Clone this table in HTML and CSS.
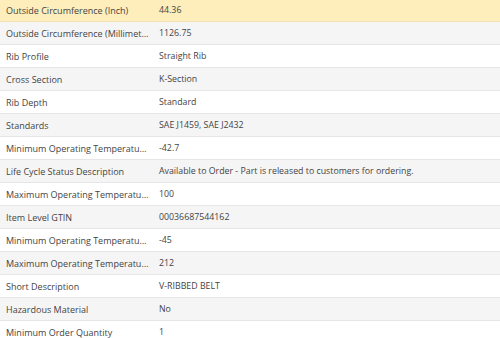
FILE: index.html
```html
<!DOCTYPE html>
<html>
<head>
<meta charset="utf-8">
<link rel="stylesheet" href="styles.css">
</head>
<body>
<div class="specs">
  <div class="row hl"><div class="k">Outside Circumference (Inch)</div><div class="v">44.36</div></div>
  <div class="row"><div class="k">Outside Circumference (Millimeters)</div><div class="v">1126.75</div></div>
  <div class="row"><div class="k">Rib Profile</div><div class="v">Straight Rib</div></div>
  <div class="row"><div class="k">Cross Section</div><div class="v">K-Section</div></div>
  <div class="row"><div class="k">Rib Depth</div><div class="v">Standard</div></div>
  <div class="row"><div class="k">Standards</div><div class="v">SAE J1459, SAE J2432</div></div>
  <div class="row"><div class="k">Minimum Operating Temperature (Celsius)</div><div class="v">-42.7</div></div>
  <div class="row"><div class="k">Life Cycle Status Description</div><div class="v">Available to Order - Part is released to customers for ordering.</div></div>
  <div class="row"><div class="k">Maximum Operating Temperature (Celsius)</div><div class="v">100</div></div>
  <div class="row"><div class="k">Item Level GTIN</div><div class="v">00036687544162</div></div>
  <div class="row"><div class="k">Minimum Operating Temperature (Fahrenheit)</div><div class="v">-45</div></div>
  <div class="row"><div class="k">Maximum Operating Temperature (Fahrenheit)</div><div class="v">212</div></div>
  <div class="row"><div class="k">Short Description</div><div class="v">V-RIBBED BELT</div></div>
  <div class="row"><div class="k">Hazardous Material</div><div class="v">No</div></div>
  <div class="row"><div class="k">Minimum Order Quantity</div><div class="v">1</div></div>
</div>
</body>
</html>
```
FILE: styles.css
```css
html, body {
  margin: 0;
  padding: 0;
  background: #fff;
}
body {
  font-family: "Open Sans", "DejaVu Sans", sans-serif;
  color: #444;
  overflow: hidden;
}
.specs {
  display: flex;
  flex-direction: column;
  margin-top: -1px;
}
.row {
  display: grid;
  grid-template-columns: 153px 1fr;
  height: 22px;
  align-items: center;
  border-bottom: 1px solid #e6e6e6;
}
.row:nth-child(even) {
  background: #f5f5f5;
}
.row.hl {
  background: #fdeebb;
  border-bottom-color: #f0e2b0;
}
.k, .v {
  white-space: nowrap;
  overflow: hidden;
  text-overflow: ellipsis;
}
.k {
  font-size: 9px;
  padding: 0 3px 0 6px;
}
.v {
  font-size: 8.8px;
  padding: 0 6px 0 6px;
}
```
